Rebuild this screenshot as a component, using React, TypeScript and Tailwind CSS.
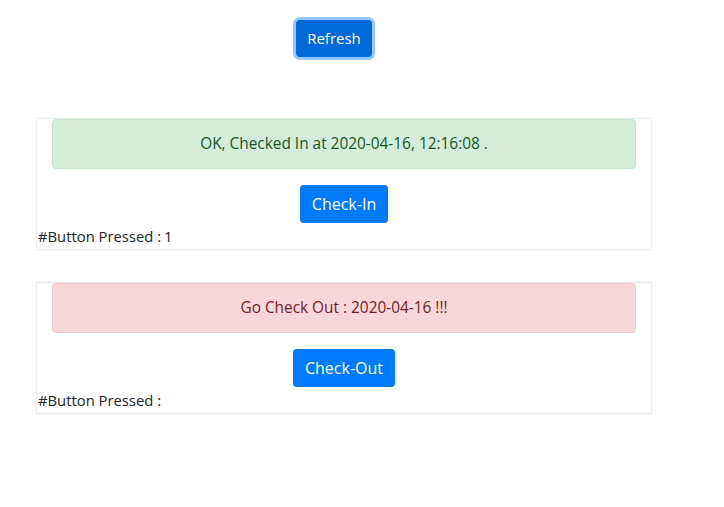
import React from "react";

function Card({
  alert,
  ok,
  label,
  pressed,
}: {
  alert: string;
  ok: boolean;
  label: string;
  pressed: string;
}) {
  return (
    <div className="w-[616px] ml-[36px] border border-[#ececec] bg-white shadow-[0_0_2px_rgba(0,0,0,0.04)] flex flex-col">
      <div
        className={
          ok
            ? "mx-[15px] h-[50px] flex items-center justify-center rounded-[4px] border border-[#c3e6cb] bg-[#d4edda] text-[#155724] text-[15.4px]"
            : "mx-[15px] h-[50px] flex items-center justify-center rounded-[4px] border border-[#f5c6cb] bg-[#f8d7da] text-[#721c24] text-[15.4px]"
        }
      >
        {alert}
      </div>
      <div className="flex justify-center mt-[16px]">
        <button className="h-[38px] px-[12px] rounded-[4px] bg-[#007bff] text-white leading-[24px]">
          {label}
        </button>
      </div>
      <div className="pl-[1px] h-[26px] leading-[26px] text-[#212529] text-[14.8px]">
        #Button Pressed :{pressed ? <span className="ml-[3px]">{pressed}</span> : null}
      </div>
    </div>
  );
}

export default function App() {
  return (
    <div
      className="w-[724px] h-[507px] bg-white text-[16px]"
      style={{ fontFamily: '"Open Sans", "Noto Sans", sans-serif' }}
    >
      <div className="pt-[20px] pl-[296px]">
        <button className="w-[76px] h-[37px] rounded-[4px] bg-[#0069d9] text-white text-[15px] shadow-[0_0_0_3px_rgba(38,143,255,0.5)]">
          Refresh
        </button>
      </div>
      <div className="mt-[61px]">
        <Card
          alert="OK, Checked In at 2020-04-16, 12:16:08 ."
          ok
          label="Check-In"
          pressed="1"
        />
      </div>
      <div className="mt-[32px]">
        <Card alert="Go Check Out : 2020-04-16 !!!" ok={false} label="Check-Out" pressed="" />
      </div>
    </div>
  );
}
